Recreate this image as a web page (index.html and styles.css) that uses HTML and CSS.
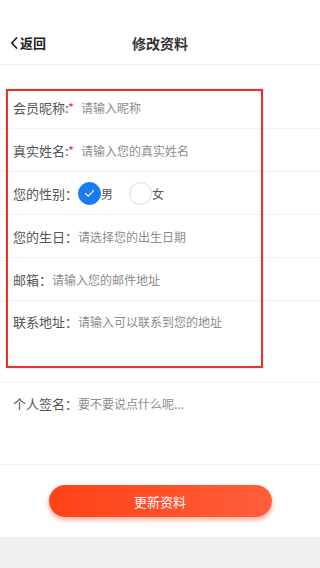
FILE: index.html
```html
<!DOCTYPE html>
<html lang="zh-CN">

<head>
    <meta charset="UTF-8">
    <meta name="viewport" content="width=device-width, initial-scale=1.0">
    <title>修改资料</title>
    <link rel="stylesheet" href="styles.css">
</head>

<body>
    <div class="page">
        <!-- top bar -->
        <div class="topbar">
            <div class="back">
                <svg class="back-icon" viewBox="0 0 8 12" width="8" height="12">
                    <path d="M6.5 1 L1.8 6 L6.5 11" fill="none" stroke="#222" stroke-width="1.8" stroke-linejoin="round" stroke-linecap="round"/>
                </svg>
                <span>返回</span>
            </div>
            <div class="title">修改资料</div>
        </div>

        <div class="form">
            <div class="row">
                <span class="label">会员昵称:<em class="req">*</em></span>
                <span class="holder holder-gap">请输入昵称</span>
            </div>
            <div class="row">
                <span class="label">真实姓名:<em class="req">*</em></span>
                <span class="holder holder-gap">请输入您的真实姓名</span>
            </div>
            <div class="row">
                <span class="label">您的性别：</span>
                <div class="radio checked">
                    <svg viewBox="0 0 12 10" width="11" height="9">
                        <path d="M1.5 5 L4.6 8 L10.5 1.8" fill="none" stroke="#fff" stroke-width="1.3" stroke-linecap="round" stroke-linejoin="round"/>
                    </svg>
                </div>
                <span class="radio-text">男</span>
                <div class="radio"></div>
                <span class="radio-text">女</span>
            </div>
            <div class="row">
                <span class="label">您的生日：</span>
                <span class="holder">请选择您的出生日期</span>
            </div>
            <div class="row">
                <span class="label">邮箱：</span>
                <span class="holder">请输入您的邮件地址</span>
            </div>
            <div class="row row-tall">
                <span class="label">联系地址：</span>
                <span class="holder">请输入可以联系到您的地址</span>
            </div>
            <div class="row row-tall">
                <span class="label">个人签名：</span>
                <span class="holder">要不要说点什么呢...</span>
            </div>
        </div>

        <div class="actions">
            <button class="submit">更新资料</button>
        </div>

        <div class="footer"></div>

        <!-- annotation box -->
        <div class="mark"></div>
    </div>
</body>

</html>
```

FILE: styles.css
```css
* {
    box-sizing: border-box;
}

body {
    margin: 0;
    background-color: #fff;
    font-family: "Noto Sans CJK SC", "Noto Sans", sans-serif;
    color: #555;
}

.page {
    position: relative;
    width: 320px;
    height: 568px;
    overflow: hidden;
    display: flex;
    flex-direction: column;
}

.topbar {
    position: relative;
    height: 65px;
    padding-top: 21px;
    border-bottom: 1px solid #efefef;
    display: flex;
    align-items: center;
    justify-content: center;
}

.back {
    position: absolute;
    left: 10px;
    top: 33px;
    display: flex;
    align-items: center;
    font-size: 13px;
    font-weight: bold;
    color: #222;
}

.back-icon {
    margin-right: 2px;
}

.title {
    font-size: 14px;
    font-weight: bold;
    color: #333;
}

.form {
    margin-top: 21px;
}

.row {
    height: 43px;
    border-bottom: 1px solid #f1f1f1;
    padding-left: 13px;
    display: flex;
    align-items: center;
}

.row-tall {
    height: 82px;
    align-items: flex-start;
    padding-top: 11px;
}

.label {
    font-size: 13px;
    color: #555;
    white-space: nowrap;
}

.req {
    font-style: normal;
    color: #f03c3c;
    margin-left: 0;
}

.holder {
    font-size: 12px;
    color: #8c8c8c;
    white-space: nowrap;
}

.row-tall .holder {
    line-height: 20px;
}

.row-tall .label {
    line-height: 20px;
}

.holder-gap {
    margin-left: 7px;
}

.radio {
    width: 23px;
    height: 23px;
    border-radius: 50%;
    border: 1px solid #d8d8d8;
    display: flex;
    align-items: center;
    justify-content: center;
}

.radio.checked {
    background-color: #1a7cf5;
    border-color: #1a7cf5;
}

.radio-text {
    font-size: 12px;
    color: #555;
    margin-left: 0;
    margin-right: 16px;
}

.actions {
    height: 72px;
    display: flex;
    align-items: center;
    justify-content: center;
}

.submit {
    width: 223px;
    height: 32px;
    border: none;
    border-radius: 16px;
    background: linear-gradient(to right, #ff4215, #ff5e3c);
    box-shadow: 0 3px 5px rgba(255, 70, 30, 0.45);
    color: #fff;
    font-family: "Noto Sans CJK SC", sans-serif;
    font-size: 13px;
    padding: 0;
}

.footer {
    flex: 1;
    background-color: #f0f0f0;
}

/* red annotation frame */
.mark {
    position: absolute;
    left: 6px;
    top: 89px;
    width: 257px;
    height: 279px;
    border: 2px solid #e5332f;
    box-shadow: 0 0 1px rgba(229, 51, 47, 0.6);
}
```
